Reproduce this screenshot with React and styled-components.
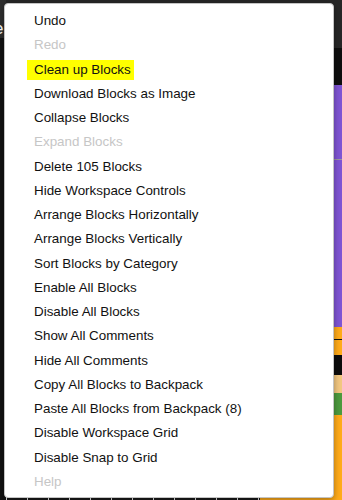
import React from 'react';
import styled, { createGlobalStyle } from 'styled-components';

const GlobalStyle = createGlobalStyle`
  html, body {
    margin: 0;
    padding: 0;
    background: #151515;
  }
  * { box-sizing: border-box; }
`;

const Page = styled.div`
  position: relative;
  width: 342px;
  height: 500px;
  overflow: hidden;
  display: flex;
  font-family: "Liberation Sans", Arial, sans-serif;
`;

const LeftRail = styled.div`
  width: 6px;
  display: flex;
  flex-direction: column;
`;

const RailTop = styled.div`
  height: 38px;
  background: #2e2e2e;
  color: #fff;
  font-size: 17px;
  line-height: 1;
  padding-top: 20px;
  margin-left: -6px;
  overflow: hidden;
`;

const RailRest = styled.div`
  flex: 1;
  background: #121212;
`;

const Center = styled.div`
  flex: 1;
  display: flex;
  flex-direction: column;
`;

const CenterTop = styled.div`
  height: 40px;
  background: #262626;
`;

const CenterBody = styled.div`
  flex: 1;
  background: #141414;
`;

const Ruler = styled.div`
  height: 6px;
  display: flex;
`;

const Ticks = styled.div`
  width: 254px;
  background: repeating-linear-gradient(90deg, #e8e8e8 0 1px, #1a1a1a 1px 21px);
`;

const Orange = styled.div`
  flex: 1;
  background: #ffab19;
`;

const RightRail = styled.div`
  width: 9px;
  display: flex;
  flex-direction: column;
`;

const Band = styled.div`
  height: ${p => p.h}px;
  flex: ${p => (p.grow ? 1 : 'none')};
  background: ${p => p.c};
  border-bottom: ${p => (p.line ? `1px solid ${p.line}` : 'none')};
`;

const Menu = styled.ul`
  position: absolute;
  left: 4px;
  top: 3px;
  width: 330px;
  height: 495px;
  margin: 0;
  padding: 5px 0 3px;
  list-style: none;
  background: #fff;
  border: 1px solid #c4c4c4;
  border-radius: 4px;
  box-shadow: 0 2px 6px rgba(0, 0, 0, 0.35);
`;

const Item = styled.li`
  height: 24.26px;
  display: flex;
  align-items: center;
  padding-left: 29px;
  font-size: 13.4px;
  color: ${p => (p.disabled ? '#c6c6c6' : '#111')};
  white-space: nowrap;
`;

const Label = styled.span`
  padding: 2px 3px 3px 7px;
  margin-left: -7px;
  background: ${p => (p.highlight ? '#ffff00' : 'transparent')};
`;

const items = [
  { text: 'Undo' },
  { text: 'Redo', disabled: true },
  { text: 'Clean up Blocks', highlight: true },
  { text: 'Download Blocks as Image' },
  { text: 'Collapse Blocks' },
  { text: 'Expand Blocks', disabled: true },
  { text: 'Delete 105 Blocks' },
  { text: 'Hide Workspace Controls' },
  { text: 'Arrange Blocks Horizontally' },
  { text: 'Arrange Blocks Vertically' },
  { text: 'Sort Blocks by Category' },
  { text: 'Enable All Blocks' },
  { text: 'Disable All Blocks' },
  { text: 'Show All Comments' },
  { text: 'Hide All Comments' },
  { text: 'Copy All Blocks to Backpack' },
  { text: 'Paste All Blocks from Backpack (8)' },
  { text: 'Disable Workspace Grid' },
  { text: 'Disable Snap to Grid' },
  { text: 'Help', disabled: true },
];

const App = () => {
  return (
    <>
      <GlobalStyle />
      <Page>
        <LeftRail>
          <RailTop>e</RailTop>
          <RailRest />
        </LeftRail>
        <Center>
          <CenterTop />
          <CenterBody />
          <Ruler>
            <Ticks />
            <Orange />
          </Ruler>
        </Center>
        <RightRail>
          <Band h={48} c="#262626" />
          <Band h={37} c="#0e0e0e" />
          <Band h={75} c="#7f55d3" line="#9a9a9a" />
          <Band h={167} c="#7f55d3" />
          <Band h={13} c="#ffab19" line="#111" />
          <Band h={15} c="#ffab19" />
          <Band h={20} c="#0c0c0c" />
          <Band h={18} c="#f2c780" />
          <Band h={22} c="#4c9a3e" />
          <Band grow c="#ffab19" />
        </RightRail>
        <Menu>
          {items.map((item, i) => (
            <Item key={i} disabled={item.disabled}>
              <Label highlight={item.highlight}>{item.text}</Label>
            </Item>
          ))}
        </Menu>
      </Page>
    </>
  );
};

export default App;
